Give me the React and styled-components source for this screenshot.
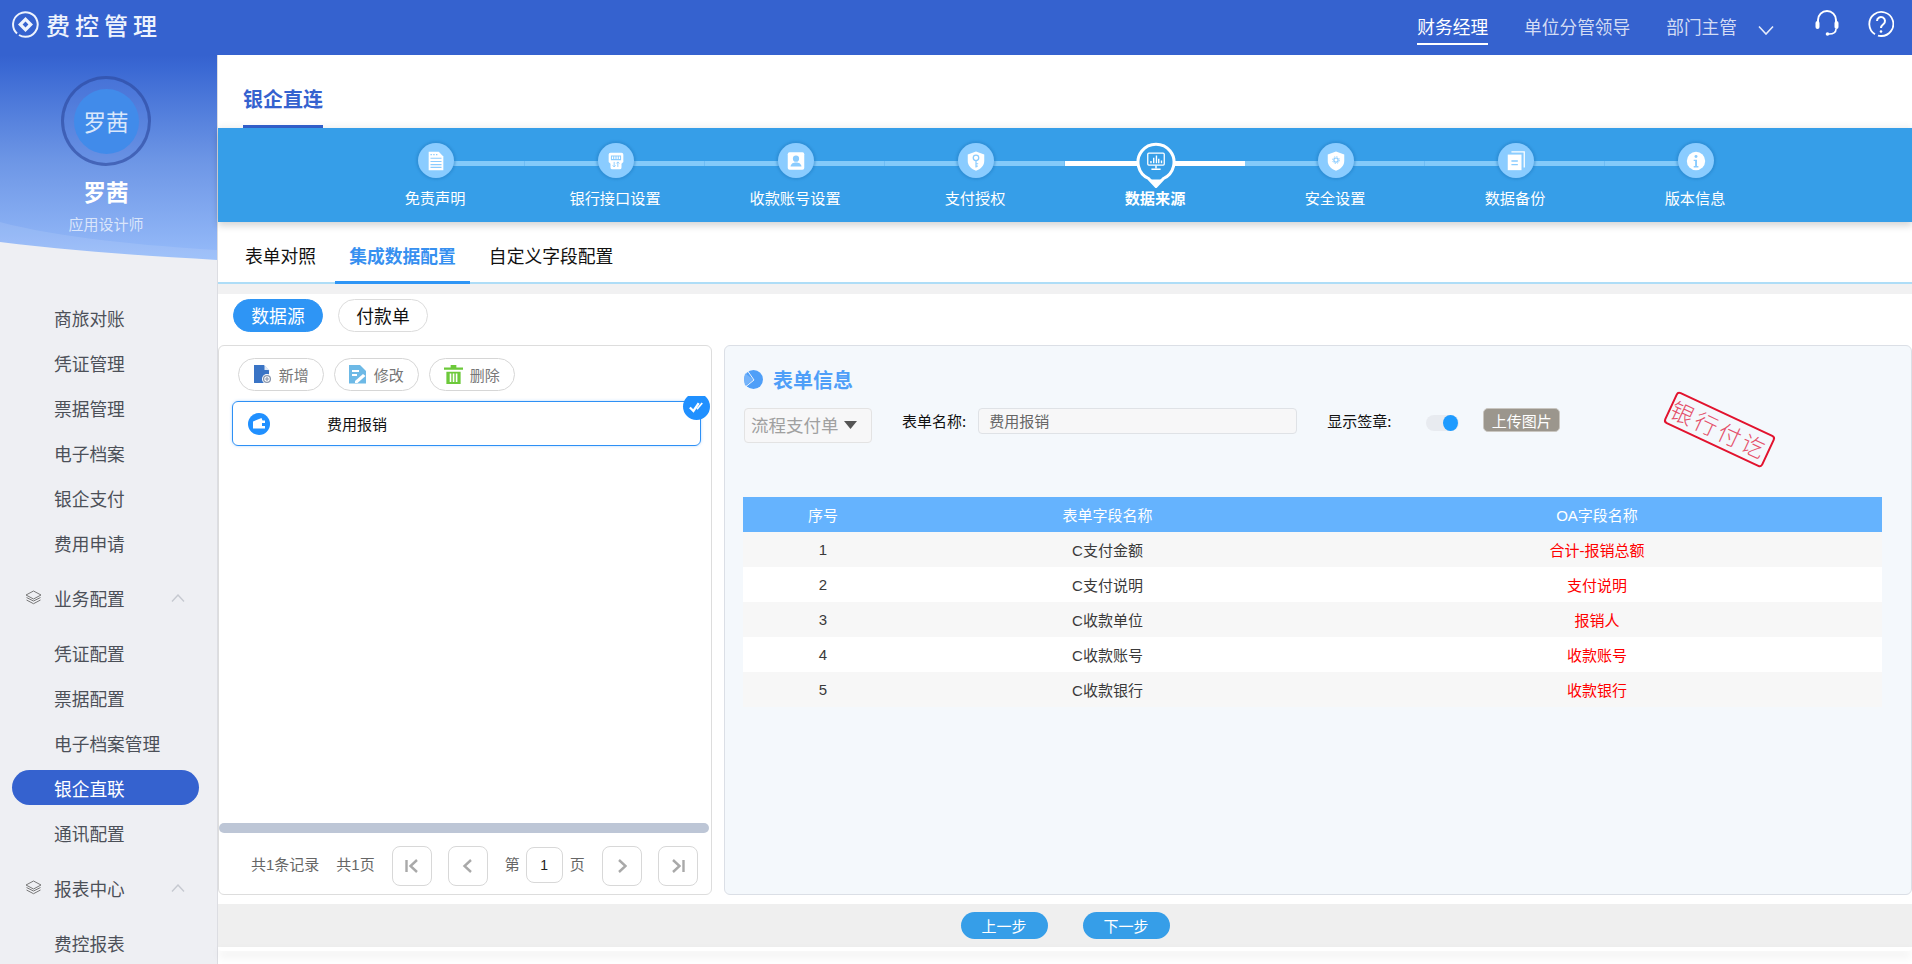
import React from "react";
import styled, { createGlobalStyle } from "styled-components";

const Global = createGlobalStyle`
  html, body { margin: 0; padding: 0; height: 100%; overflow: hidden; background: #fff; }
  * { box-sizing: border-box; }
  body { font-family: "Liberation Sans", "Noto Sans CJK SC", sans-serif; }
`;

const Page = styled.div`width: 1912px; height: 964px; display: flex; flex-direction: column; overflow: hidden;`;
const TopBar = styled.header`height: 55px; flex: none; display: flex; align-items: flex-start; padding: 0 18px 0 12px; background: #3562cf; color: #fff;`;
const Logo = styled.div`display: flex; align-items: center; height: 49px; gap: 7px;`;
const LogoText = styled.span`font-size: 24px; letter-spacing: 5px; font-weight: 500; color: #eef3fd; font-family: "Noto Sans CJK SC", sans-serif;`;
const Roles = styled.nav`margin-left: auto; display: flex; gap: 36px;`;
const Role = styled.a`
  margin-top: 10px; height: 35px; font-size: 17.7px; line-height: 33px; white-space: nowrap;
  font-family: "Noto Sans CJK SC", sans-serif; font-weight: 400;
  color: ${p => (p.$active ? "#ffffff" : "#d3dcf4")};
  border-bottom: 2px solid ${p => (p.$active ? "#ffffff" : "transparent")};
`;
const TopIcons = styled.div`display: flex; align-items: flex-start;`;
const RoleChevron = styled.svg`margin: 25px 41px 0 21px;`;
const HelpIcon = styled.svg`margin: 11px 0 0 29px;`;
const HeadIcon = styled.svg`margin-top: 10px;`;

const Body = styled.div`flex: 1; display: flex; min-height: 0;`;
const Sidebar = styled.aside`width: 218px; flex: none; background: #eeeff3; border-right: 1px solid #dcdde2; overflow: hidden;`;
const Profile = styled.div`
  position: relative; height: 207px; padding: 21px 5px 0 0; display: flex; flex-direction: column; align-items: center;
  background: linear-gradient(180deg, #3562cf 0%, #3a68d3 6%, #6c95e5 50%, #97bcfa 100%);
`;
const Wave = styled.svg`position: absolute; left: 0; bottom: 0;`;
const AvatarRing = styled.div`width: 90px; height: 90px; border-radius: 50%; border: 3px solid rgba(38, 66, 150, 0.55); display: flex; align-items: center; justify-content: center; background: rgba(90, 130, 225, 0.25);`;
const Avatar = styled.div`width: 65px; height: 65px; border-radius: 50%; background: #418bea; color: #d9e7fb; font-size: 22.5px; display: flex; align-items: center; justify-content: center; font-family: "Noto Sans CJK SC", sans-serif; font-weight: 400;`;
const UserName = styled.div`margin-top: 10px; font-size: 22.5px; line-height: 30px; font-weight: 700; color: #fff; font-family: "Noto Sans CJK SC", sans-serif;`;
const UserRole = styled.div`position: relative; margin-top: 8px; font-size: 15px; line-height: 20px; color: rgba(255, 255, 255, 0.7); font-family: "Noto Sans CJK SC", sans-serif; font-weight: 400;`;
const Nav = styled.nav`padding-top: 33px;`;
const NavItem = styled.a`
  display: flex; align-items: center; white-space: nowrap; font-size: 17.7px; font-family: "Noto Sans CJK SC", sans-serif;
  height: ${p => (p.$active ? "35px" : "45px")};
  margin: ${p => (p.$active ? "5px 18px 5px 12px" : "0")};
  padding-left: ${p => (p.$active ? "42px" : "54px")};
  border-radius: 18px;
  color: ${p => (p.$active ? "#fff" : "#4c5058")};
  background: ${p => (p.$active ? "#3562cf" : "transparent")};
  font-weight: 400;
`;
const NavGroup = styled.div`height: 65px; display: flex; align-items: center; padding-left: 25px; font-size: 17.7px; color: #4c5058; font-family: "Noto Sans CJK SC", sans-serif; font-weight: 400;`;
const GroupIcon = styled.svg`margin-right: 12px; flex: none;`;
const GroupChevron = styled.svg`margin-left: 46px; flex: none;`;

const Main = styled.main`flex: 1; min-width: 0; background: #fff; display: flex; flex-direction: column;`;
const TitleBar = styled.div`height: 73px; flex: none; padding: 21px 0 0 25px;`;
const PageTitle = styled.div`display: inline-block; height: 52px; line-height: 46px; font-size: 20px; font-weight: 700; color: #3562cf; border-bottom: 3px solid #3562cf; font-family: "Noto Sans CJK SC", sans-serif;`;
const StepBand = styled.div`height: 94px; flex: none; padding: 15px 0 0 127px; display: flex; background: #369ee8; box-shadow: 0 -3px 6px rgba(0,0,0,.04), 0 4px 7px rgba(0, 0, 0, 0.16); position: relative;`;
const Step = styled.div`
  position: relative; width: 180px; display: flex; flex-direction: column; align-items: center;
  &::before {
    content: ""; position: absolute; top: 18px; height: 5px;
    left: ${p => (p.$first ? "50%" : "0")}; right: ${p => (p.$last ? "50%" : "0")};
    background: ${p => (p.$active ? "#fff" : "#83cafa")};
    border-right: ${p => (p.$last || p.$active ? "0" : "1px solid #6fbdf4")};
  }
`;
const StepDot = styled.div`
  position: relative; width: 36px; height: 35px; margin-left: 2px; border-radius: 50%; display: flex; align-items: center; justify-content: center;
  background: ${p => (p.$active ? "transparent" : "#8accff")};
  box-shadow: ${p => (p.$active ? "none" : "0 0 2px 2px rgba(35, 120, 190, 0.35)")};
`;
const StepPin = styled.svg`position: absolute; left: -2px; top: -2px;`;
const StepGlyph = styled.svg`position: relative;`;
const StepLabel = styled.div`margin-top: 9px; font-size: 15.2px; line-height: 20px; color: #fff; white-space: nowrap; font-family: "Noto Sans CJK SC", sans-serif; font-weight: ${p => (p.$active ? 700 : 400)};`;

const Tabs = styled.div`margin-top: 7px; height: 55px; flex: none; padding-left: 13px; display: flex; gap: 5px; border-bottom: 2px solid #aeddf7;`;
const Tab = styled.a`
  height: 55px; padding: 0 14px; line-height: 53px; font-size: 17.8px; white-space: nowrap;
  font-family: "Noto Sans CJK SC", sans-serif;
  color: ${p => (p.$active ? "#3790f0" : "#111")};
  font-weight: ${p => (p.$active ? 700 : 400)};
  border-bottom: ${p => (p.$active ? "3px solid #2e95f5" : "0")};
`;
const GrayGap = styled.div`height: 10px; flex: none; background: #f1f1f2;`;
const PillRow = styled.div`flex: none; padding: 5px 0 13px 15px; display: flex; gap: 15px;`;
const Pill = styled.a`
  width: 90px; height: 33px; padding-bottom: 2px; border-radius: 17px; font-size: 17.8px; display: flex; align-items: center; justify-content: center;
  font-family: "Noto Sans CJK SC", sans-serif; font-weight: 400;
  color: ${p => (p.$active ? "#fff" : "#111")};
  background: ${p => (p.$active ? "#2e95f5" : "#fff")};
  border: 1px solid ${p => (p.$active ? "#2e95f5" : "#dcdcdc")};
`;
const Panels = styled.div`height: 550px; flex: none; display: flex; gap: 12px;`;
const LeftPanel = styled.section`width: 494px; flex: none; display: flex; flex-direction: column; border: 1px solid #dddddd; border-radius: 6px; overflow: hidden; background: #fff;`;
const Toolbar = styled.div`flex: none; padding: 12px 0 0 19px; display: flex; gap: 10px;`;
const ToolButton = styled.button`
  width: 85.5px; height: 33px; padding: 0; background: #fff; border: 1px solid #d6d6d6; border-radius: 17px; display: flex; align-items: center; justify-content: center; gap: 7px;
  font: 400 15px "Noto Sans CJK SC", sans-serif; color: #777;
`;
const RecordList = styled.div`flex: 1; min-height: 0; margin-top: 5px; padding: 5px 10px 0 13px; overflow: hidden;`;
const RecordCard = styled.div`position: relative; height: 45px; border: 1px solid #2e90f5; border-radius: 6px; display: flex; align-items: center; padding-left: 15px; box-shadow: 0 0 3px rgba(46, 144, 245, .35);`;
const RecordName = styled.span`margin-left: 57px; font: 400 15px "Noto Sans CJK SC", sans-serif; color: #111;`;
const CheckBadge = styled.div`position: absolute; right: -10px; top: -9px; width: 27px; height: 27px; border-radius: 50%; background: #2090ff; display: flex; align-items: center; justify-content: center;`;
const FakeScrollbar = styled.div`flex: none; height: 10px; margin-right: 2px; border-radius: 5px; background: #bdc6d6;`;
const Pagination = styled.div`flex: none; height: 61px; padding: 13px 0 0 32px; display: flex; align-items: flex-start; font: 400 15px "Liberation Sans", "Noto Sans CJK SC", sans-serif; color: #666;`;
const PageInfo = styled.span`line-height: 38px; white-space: nowrap; margin-right: ${p => p.$gap || 0}px;`;
const PageButton = styled.button`width: 40px; height: 40px; padding: 0; border: 1px solid #d8d8d8; border-radius: 8px; background: #fff; display: flex; align-items: center; justify-content: center; margin-right: ${p => p.$gap || 0}px; flex: none;`;
const PageInput = styled.div`width: 37px; height: 36px; margin: 1px 7px 0 6px; border: 1px solid #d8d8d8; border-radius: 8px; text-align: center; line-height: 34px; font-size: 14px; color: #222; flex: none;`;

const RightPanel = styled.section`position: relative; flex: 1; min-width: 0; padding: 21px 29px 0 19px; border: 1px solid #dbdfe6; border-radius: 6px; background: #f4f8fc;`;
const PanelTitle = styled.div`height: 24px; display: flex; align-items: center; gap: 10px; font: 700 20px "Noto Sans CJK SC", sans-serif; color: #4f9ff8;`;
const FormRow = styled.div`height: 35px; margin-top: 17px; display: flex; align-items: flex-start;`;
const SelectBox = styled.div`width: 128px; height: 35px; padding: 0 0 2px 6px; flex: none; border: 1px solid #e3e3e3; border-radius: 4px; background: #f7f7f8; display: flex; align-items: center; gap: 5px; font: 400 17.5px "Noto Sans CJK SC", sans-serif; color: #a0a0a0; white-space: nowrap;`;
const FieldLabel = styled.label`font: 400 15px/26px "Noto Sans CJK SC", sans-serif; color: #111; white-space: nowrap; margin-left: ${p => p.$left}px; margin-right: ${p => p.$right}px;`;
const TextField = styled.div`width: 319px; height: 26px; flex: none; border: 1px solid #dfe2e6; border-radius: 4px; background: #f7f7f8; padding-left: 10px; font: 400 15px/24px "Noto Sans CJK SC", sans-serif; color: #666;`;
const Toggle = styled.div`width: 33px; height: 16px; margin-top: 7px; flex: none; border-radius: 8px; background: #e8ebf0; display: flex; justify-content: flex-end; padding-right: 1px;`;
const ToggleKnob = styled.div`width: 15px; height: 16px; border-radius: 50%; background: #1e9bff;`;
const UploadButton = styled.button`width: 77px; height: 24px; margin-left: 24px; padding: 0; flex: none; border: 1px solid #c9c6c0; border-radius: 5px; background: #9b968d; color: #fff; font: 400 15px "Noto Sans CJK SC", sans-serif;`;
const Stamp = styled.div`
  position: absolute; left: 940px; top: 66px; width: 109px; height: 35px; transform: rotate(25deg);
  border: 2px solid #e2132e; border-radius: 4px; color: #e4506a; font: 300 23px/30px "Noto Sans CJK SC", sans-serif; text-align: center; letter-spacing: 3px; white-space: nowrap; overflow: hidden;
`;
const DataTable = styled.div`margin: 54px 0 0 -1px;`;
const TableRow = styled.div`
  height: 35px; padding-bottom: 1px; display: grid; grid-template-columns: 160px 409px 1fr; align-items: center; text-align: center; font-size: 15px; color: #3a3a3a;
  font-family: "Liberation Sans", "Noto Sans CJK SC", sans-serif; font-weight: 400;
  background: ${p => (p.$head ? "#65b3fe" : p.$odd ? "#f7f7f7" : "#fff")};
  ${p => p.$head && "color: #fff;"}
`;
const OaCell = styled.span`color: ${p => (p.$head ? "#fff" : "#ff0000")};`;

const BottomGap = styled.div`height: 9px; flex: none;`;
const BottomBar = styled.div`height: 43px; flex: none; background: #efefef; display: flex; justify-content: center; align-items: center; gap: 35px;`;
const StepButton = styled.button`width: 87px; height: 27px; padding: 0; border: 0; border-radius: 14px; background: #369ee8; color: #fff; font: 400 15px "Noto Sans CJK SC", sans-serif;`;
const BottomEdge = styled.div`height: 4px; flex: none; background: #fff; box-shadow: 0 5px 10px rgba(0, 0, 0, 0.1); border-radius: 0 0 4px 4px;`;

const navTop = ["商旅对账", "凭证管理", "票据管理", "电子档案", "银企支付", "费用申请"];
const navBiz = ["凭证配置", "票据配置", "电子档案管理", "银企直联", "通讯配置"];

const L = "#8accff";
const glyphs = [
  <g key="0"><path d="M4 2h11l5 5v15H4z" fill="#fff" /><path d="M6 5h1.5M9 5h1.5M12 5h1.5M6 9h12M6 12.5h12M6 16h12M6 19h12" stroke={L} strokeWidth="1.2" /></g>,
  <g key="1"><path d="M6 3h12a2 2 0 0 1 2 2v8l-2 2v4a2 2 0 0 1-2 2H8a2 2 0 0 1-2-2v-4l-2-2V5a2 2 0 0 1 2-2z" fill="#fff" /><path d="M7 6.500h10v4H7z M9.500 6.500v4 M12 6.500v4 M14.500 6.500v4" fill="none" stroke={L} strokeWidth="1.1" /><path d="M10 13v5.500m-1.600-1.700 1.600 1.700 1.600-1.700M14 18.500V13m-1.600 1.700L14 13l1.600 1.700" fill="none" stroke={L} strokeWidth="1" /></g>,
  <g key="2"><rect x="3" y="2.500" width="18" height="19" rx="2" fill="#fff" /><circle cx="12" cy="9.500" r="3.400" fill={L} /><path d="M6 18c.5-3.500 3-4.500 6-4.500s5.500 1 6 4.500z" fill={L} /></g>,
  <g key="3"><path d="M12 1.500 21 5v7c0 5-4 9-9 10.500C7 21 3 17 3 12V5z" fill="#fff" /><circle cx="12" cy="8.500" r="3" fill="none" stroke={L} strokeWidth="1.400" /><path d="M12 11.500V19M12 15h2.400M12 17.500h2" stroke={L} strokeWidth="1.300" fill="none" /></g>,
  <g key="4"><rect x="3" y="3.500" width="18" height="13" rx="1.200" fill="none" stroke="#fff" strokeWidth="1.400" /><path d="M6.500 14.500v-2.500M9.500 14.500V8.500M12.500 14.500V6M15 14.500V9.500M18 14.500v-3" stroke="#fff" strokeWidth="1.500" /><path d="M12 17v3M7 21h10" stroke="#fff" strokeWidth="1.600" /></g>,
  <g key="5"><path d="M12 1.500 21 5v7c0 5-4 9-9 10.500C7 21 3 17 3 12V5z" fill="#fff" /><circle cx="12" cy="11" r="2.300" fill="none" stroke={L} strokeWidth="1.300" /><circle cx="12" cy="11" r="3.700" fill="none" stroke={L} strokeWidth="1" strokeDasharray="1.500 1.400" /></g>,
  <g key="6"><path d="M7 2h14v17" fill="none" stroke="#fff" strokeWidth="1.400" /><path d="M3 5h15v17H3z" fill="#fff" /><path d="M7 12h7M7 16h7" stroke={L} strokeWidth="1.400" /></g>,
  <g key="7"><circle cx="12" cy="12" r="10" fill="#fff" /><circle cx="12" cy="7" r="1.600" fill={L} /><path d="M9.500 10.500h3.600v7h1.500v1.500H9.500v-1.500H11v-5.500H9.500z" fill={L} /></g>,
];
const steps = ["免责声明", "银行接口设置", "收款账号设置", "支付授权", "数据来源", "安全设置", "数据备份", "版本信息"];

const Layers = () => (
  <GroupIcon width="17" height="15" viewBox="0 0 17 15" fill="none" stroke="#777" strokeWidth="1">
    <path d="M8.500 1 16 5 8.500 9 1 5z" />
    <path d="M1.500 7.500 8.500 11l7-3.500M1.500 10 8.500 13.700l7-3.700" />
  </GroupIcon>
);
const ChevUp = () => (
  <GroupChevron width="14" height="8" viewBox="0 0 14 8" fill="none" stroke="#c6c9d0" strokeWidth="1.400"><path d="M1 7.500 7 1l6 6.500" /></GroupChevron>
);
const PageGlyph = ({ d }) => (
  <svg width="18" height="18" viewBox="0 0 18 18" fill="none" stroke="#a9a9a9" strokeWidth="2.400"><path d={d} /></svg>
);

export default function App() {
  return (
    <Page>
      <Global />
      <TopBar>
        <Logo>
          <svg width="27" height="27" viewBox="0 0 27 27">
            <path d="M5 22.500A12.300 12.300 0 1 1 13.500 25.800 12 12 0 0 1 7 24" fill="none" stroke="#eef3fd" strokeWidth="2" />
            <path fillRule="evenodd" fill="#eef3fd" d="M13.500 6 21 13.500 13.500 21 6 13.500z M13.500 10.600 10.600 13.500 13.500 16.400 16.400 13.500z" />
          </svg>
          <LogoText>费控管理</LogoText>
        </Logo>
        <Roles>
          <Role $active>财务经理</Role>
          <Role>单位分管领导</Role>
          <Role>部门主管</Role>
        </Roles>
        <TopIcons>
          <RoleChevron width="16" height="10" viewBox="0 0 16 10" fill="none" stroke="#e6ecfa" strokeWidth="1.600"><path d="M1 1.500 8 9l7-7.500" /></RoleChevron>
          <HeadIcon width="24" height="26" viewBox="0 0 24 26" fill="none" stroke="#fff">
            <path d="M3 13V10a9 9 0 0 1 18 0v3" strokeWidth="2" />
            <rect x="0.500" y="11" width="4" height="8" rx="2" fill="#fff" strokeWidth="0" />
            <rect x="19.500" y="11" width="4" height="8" rx="2" fill="#fff" strokeWidth="0" />
            <path d="M21 19c0 3.500-3 5-7 5" strokeWidth="1.600" />
            <circle cx="12.500" cy="24" r="1.800" fill="#fff" strokeWidth="0" />
          </HeadIcon>
          <HelpIcon width="26" height="26" viewBox="0 0 26 26" fill="none" stroke="#fff" strokeWidth="1.800">
            <path d="M7 23.200A12 12 0 1 1 13 25c-1 0-2-.1-3-.4" />
            <path d="M9 10a4 4 0 1 1 6.400 3.200C14 14.300 13 15 13 17" strokeWidth="2" />
            <circle cx="13" cy="20.500" r="1.300" fill="#fff" stroke="none" />
          </HelpIcon>
        </TopIcons>
      </TopBar>
      <Body>
        <Sidebar>
          <Profile>
            <Wave width="218" height="40" viewBox="0 0 218 40">
              <path d="M0 0C60 16 150 24 218 28V40H0z" fill="rgba(255,255,255,.1)" />
              <path d="M0 20C70 29 150 34 218 38V40H0z" fill="#eeeff3" />
            </Wave>
            <AvatarRing><Avatar>罗茜</Avatar></AvatarRing>
            <UserName>罗茜</UserName>
            <UserRole>应用设计师</UserRole>
          </Profile>
          <Nav>
            {navTop.map(t => <NavItem key={t}>{t}</NavItem>)}
            <NavGroup><Layers />业务配置<ChevUp /></NavGroup>
            {navBiz.map(t => <NavItem key={t} $active={t === "银企直联"}>{t}</NavItem>)}
            <NavGroup><Layers />报表中心<ChevUp /></NavGroup>
            <NavItem>费控报表</NavItem>
          </Nav>
        </Sidebar>
        <Main>
          <TitleBar><PageTitle>银企直连</PageTitle></TitleBar>
          <StepBand>
            {steps.map((s, i) => {
              const active = i === 4;
              return (
                <Step key={s} $first={i === 0} $last={i === 7} $active={active}>
                  <StepDot $active={active}>
                    {active && (
                      <StepPin width="40" height="47" viewBox="0 0 40 47">
                        <path d="M20 45.500 12.500 37.500A18 18 0 1 1 27.500 37.500z" fill="#369ee8" stroke="#fff" strokeWidth="3" />
                        <path d="M20 46 13.500 38.500h13z" fill="#fff" />
                      </StepPin>
                    )}
                    <StepGlyph width="22" height="22" viewBox="0 0 24 24">{glyphs[i]}</StepGlyph>
                  </StepDot>
                  <StepLabel $active={active}>{s}</StepLabel>
                </Step>
              );
            })}
          </StepBand>
          <Tabs>
            <Tab>表单对照</Tab>
            <Tab $active>集成数据配置</Tab>
            <Tab>自定义字段配置</Tab>
          </Tabs>
          <GrayGap />
          <PillRow>
            <Pill $active>数据源</Pill>
            <Pill>付款单</Pill>
          </PillRow>
          <Panels>
            <LeftPanel>
              <Toolbar>
                <ToolButton>
                  <svg width="19" height="19" viewBox="0 0 19 19">
                    <path d="M1 0h10l5 5.500V18H1z" fill="#3a74c5" />
                    <path d="M11.500 0 16 5h-4.500z" fill="#dfe9f6" />
                    <circle cx="14" cy="14" r="5" fill="#fff" />
                    <circle cx="14" cy="14" r="3.400" fill="#fff" stroke="#8a97ad" strokeWidth="1.300" />
                    <path d="M14 12v4M12 14h4" stroke="#8a97ad" strokeWidth="1.200" />
                  </svg>
                  新增
                </ToolButton>
                <ToolButton>
                  <svg width="18" height="19" viewBox="0 0 18 19">
                    <path d="M0 0h11l6 6v12.500H0z" fill="#6db9e6" />
                    <path d="M3 6h7M3 10h5" stroke="#fff" strokeWidth="1.800" />
                    <path d="M6 16l8-7 2.500 2-8 7H6z" fill="#fff" />
                  </svg>
                  修改
                </ToolButton>
                <ToolButton>
                  <svg width="19" height="19" viewBox="0 0 20 20">
                    <path d="M7 0h6v2.500h7V5H0V2.500h7z" fill="#6cc93a" />
                    <path d="M2.500 7h15v13h-15zM6 9v9h1.700V9zM9.200 9v9h1.700V9zM12.400 9v9h1.700V9z" fill="#6cc93a" fillRule="evenodd" />
                  </svg>
                  删除
                </ToolButton>
              </Toolbar>
              <RecordList>
                <RecordCard>
                  <svg width="22" height="22" viewBox="0 0 22 22">
                    <circle cx="11" cy="11" r="11" fill="#2090ff" />
                    <path d="M5 8.500 13.500 5l1 2.500H17v8H5z" fill="#fff" />
                    <path d="M14 10h4v3h-4z" fill="#2090ff" />
                  </svg>
                  <RecordName>费用报销</RecordName>
                  <CheckBadge>
                    <svg width="15" height="12" viewBox="0 0 17 13" fill="none" stroke="#fff" strokeWidth="2.600"><path d="M1 7l4 4 6-9" /><path d="M9 9l6-7" strokeWidth="2" /></svg>
                  </CheckBadge>
                </RecordCard>
              </RecordList>
              <FakeScrollbar />
              <Pagination>
                <PageInfo $gap={17}>共1条记录</PageInfo>
                <PageInfo $gap={17}>共1页</PageInfo>
                <PageButton $gap={16}><PageGlyph d="M3.500 3v12M14 3 7.500 9l6.500 6" /></PageButton>
                <PageButton $gap={17}><PageGlyph d="M12 3 5.500 9l6.500 6" /></PageButton>
                <PageInfo>第</PageInfo>
                <PageInput>1</PageInput>
                <PageInfo $gap={17}>页</PageInfo>
                <PageButton $gap={16}><PageGlyph d="M6 3l6.500 6L6 15" /></PageButton>
                <PageButton><PageGlyph d="M14.500 3v12M4 3l6.500 6L4 15" /></PageButton>
              </Pagination>
            </LeftPanel>
            <RightPanel>
              <PanelTitle>
                <svg width="19" height="19" viewBox="0 0 18 18">
                  <circle cx="9" cy="9" r="9" fill="#4f9ff8" />
                  <path d="M1 3 9.500 9.500 1 15 0 9z" fill="#74b3fa" />
                  <path d="M3.500 1 9.500 9.500 2 15.500" fill="none" stroke="#f4f8fc" strokeWidth="0.900" />
                </svg>
                表单信息
              </PanelTitle>
              <FormRow>
                <SelectBox>
                  流程支付单
                  <svg width="13" height="8" viewBox="0 0 13 8"><path d="M0 0h13L6.500 8z" fill="#555" /></svg>
                </SelectBox>
                <FieldLabel $left={30} $right={12}>表单名称:</FieldLabel>
                <TextField>费用报销</TextField>
                <FieldLabel $left={30} $right={35}>显示签章:</FieldLabel>
                <Toggle><ToggleKnob /></Toggle>
                <UploadButton>上传图片</UploadButton>
              </FormRow>
              <Stamp>银行付讫</Stamp>
              <DataTable>
                <TableRow $head><span>序号</span><span>表单字段名称</span><OaCell $head>OA字段名称</OaCell></TableRow>
                <TableRow $odd><span>1</span><span>C支付金额</span><OaCell>合计-报销总额</OaCell></TableRow>
                <TableRow><span>2</span><span>C支付说明</span><OaCell>支付说明</OaCell></TableRow>
                <TableRow $odd><span>3</span><span>C收款单位</span><OaCell>报销人</OaCell></TableRow>
                <TableRow><span>4</span><span>C收款账号</span><OaCell>收款账号</OaCell></TableRow>
                <TableRow $odd><span>5</span><span>C收款银行</span><OaCell>收款银行</OaCell></TableRow>
              </DataTable>
            </RightPanel>
          </Panels>
          <BottomGap />
          <BottomBar>
            <StepButton>上一步</StepButton>
            <StepButton>下一步</StepButton>
          </BottomBar>
          <BottomEdge />
        </Main>
      </Body>
    </Page>
  );
}
